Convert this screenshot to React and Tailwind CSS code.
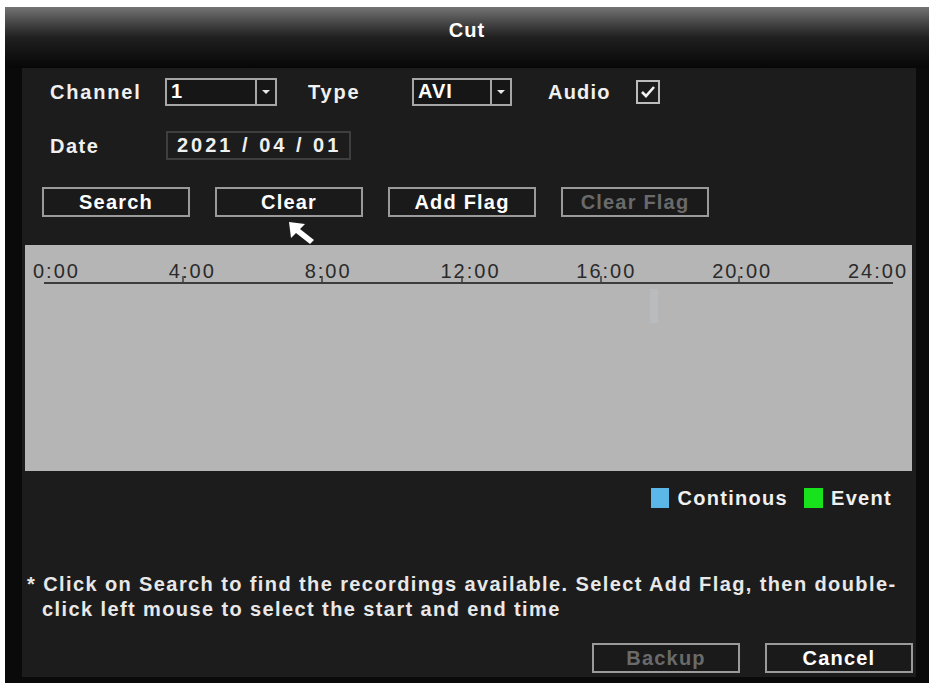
import React from 'react';

const font = "font-['Liberation_Sans',Arial,sans-serif]";

function Select({ value, width }) {
  return (
    <div className={`flex h-[28px] border-2 border-[#a6a6a6] bg-[#161616] ${width}`}>
      <div className="flex-1 pl-[4px] leading-[22px] text-[20px] font-bold tracking-[1px] text-white">{value}</div>
      <div className="flex w-[20px] items-center justify-center border-l-2 border-[#a6a6a6]">
        <svg width="8" height="6" viewBox="0 0 8 6">
          <path d="M0 1 L8 1 L4 5 Z" fill="#e8e8e8" />
        </svg>
      </div>
    </div>
  );
}

function Btn({ children, disabled }) {
  return (
    <button
      className={`h-[30px] w-[148px] border-2 border-[#9a9a9a] bg-[#1a1a1a] text-[20px] font-bold tracking-[1.2px] leading-[24px] ${
        disabled ? 'text-[#6a6a6a]' : 'text-white'
      }`}
    >
      {children}
    </button>
  );
}

const hours = ['0:00', '4:00', '8:00', '12:00', '16:00', '20:00'];

export default function App() {
  return (
    <div className={`h-[685px] w-[932px] bg-white pl-[5px] pt-[7px] ${font}`}>
      <div className="flex h-[676px] w-[924px] flex-col bg-[#0a0a0a]">
        {/* title bar */}
        <div className="flex h-[61px] justify-center bg-gradient-to-b from-[#747474] via-[#202020] to-[#070707] pt-[8px]">
          <span className="text-[20px] font-bold tracking-[1px] text-white">Cut</span>
        </div>

        {/* body */}
        <div className="relative mb-[6px] ml-[17px] mr-[13px] flex flex-1 flex-col bg-[#1c1c1c] text-[#f0f0f0]">
          <div className="mt-[10px] flex h-[28px] items-center pl-[28px]">
            <span className="w-[115px] text-[20px] font-bold tracking-[1.8px]">Channel</span>
            <Select value="1" width="w-[112px]" />
            <span className="ml-[31px] w-[104px] text-[20px] font-bold tracking-[1.8px]">Type</span>
            <Select value="AVI" width="w-[100px]" />
            <span className="ml-[36px] w-[88px] text-[20px] font-bold tracking-[1.2px]">Audio</span>
            <div className="flex h-[24px] w-[24px] items-center justify-center border-2 border-[#bdbdbd]">
              <svg width="16" height="14" viewBox="0 0 16 14">
                <path d="M2 7 L6 11 L14 2" stroke="#f2f2f2" strokeWidth="2.6" fill="none" />
              </svg>
            </div>
          </div>

          <div className="mt-[25px] flex h-[29px] items-center pl-[28px]">
            <span className="w-[116px] text-[20px] font-bold tracking-[1.5px]">Date</span>
            <div className="h-[29px] w-[185px] border-2 border-[#3e3e3e] pl-[9px] text-[20px] font-bold leading-[25px] tracking-[3px]">
              2021 / 04 / 01
            </div>
          </div>

          <div className="mt-[27px] flex gap-[25px] pl-[20px]">
            <Btn>Search</Btn>
            <Btn>Clear</Btn>
            <Btn>Add Flag</Btn>
            <Btn disabled>Clear Flag</Btn>
          </div>

          {/* timeline */}
          <div className="relative ml-[3px] mt-[28px] h-[226px] w-[887px] bg-[#b5b5b5]">
            <div className="flex pl-[8px] pr-[4px] pt-[11px] text-[20px] tracking-[2px] text-[#2a2a2a]">
              {hours.map((h) => (
                <span key={h} className="w-[139.5px]">
                  {h}
                </span>
              ))}
              <span className="ml-auto">24:00</span>
            </div>
            <svg className="absolute left-0 top-[30px]" width="887" height="12">
              <line x1="19" y1="8" x2="868" y2="8" stroke="#3c3c3c" strokeWidth="2" />
              {[158, 297, 437, 576, 714].map((x) => (
                <line key={x} x1={x} y1="1" x2={x} y2="9" stroke="#3c3c3c" strokeWidth="1.5" />
              ))}
            </svg>
            <div className="absolute left-[625px] top-[44px] h-[34px] w-[8px] bg-[#b9bcbf]" />
          </div>

          {/* legend */}
          <div className="mt-[17px] flex h-[20px] items-center justify-end pr-[24px] text-[20px] font-bold tracking-[1.3px]">
            <span className="h-[20px] w-[18px] bg-[#5bb7e8]" />
            <span className="ml-[8px]">Continous</span>
            <span className="ml-[16px] h-[20px] w-[19px] bg-[#18e21c]" />
            <span className="ml-[8px]">Event</span>
          </div>

          {/* note */}
          <p className="mt-[64px] whitespace-nowrap pl-[20px] -indent-[15px] text-[20px] font-bold leading-[25px] tracking-[1.4px] text-[#e8e8e8]">
            * Click on Search to find the recordings available. Select Add Flag, then double-
            <br />
            click left mouse to select the start and end time
          </p>

          <div className="mt-auto mb-[4px] flex justify-end gap-[25px] pr-[3px]">
            <Btn disabled>Backup</Btn>
            <Btn>Cancel</Btn>
          </div>

          {/* mouse cursor */}
          <svg className="absolute left-[266px] top-[153px]" width="30" height="26" viewBox="0 0 30 26">
            <path d="M1 1 L17 3 L12 8 L26 19 L22 23 L8 12 L3 17 Z" fill="#ffffff" />
          </svg>
        </div>
      </div>
    </div>
  );
}
